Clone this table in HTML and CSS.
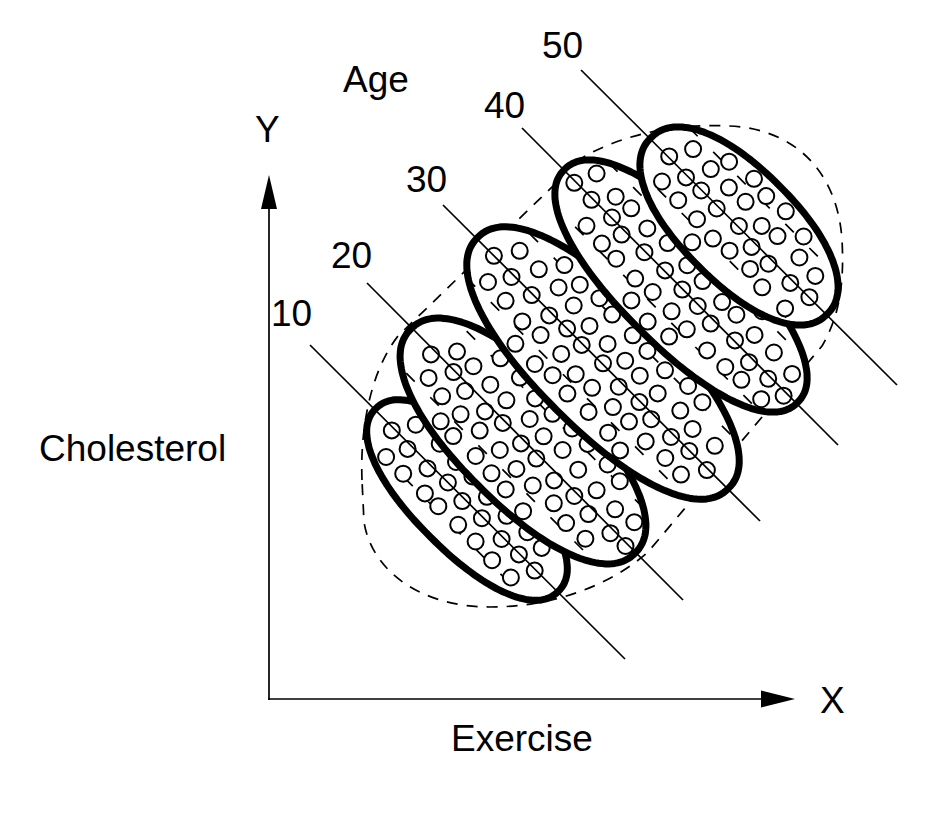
FILE: index.html
```html
<!DOCTYPE html>
<html lang="en">
<head>
<meta charset="utf-8">
<title>Age, exercise and cholesterol</title>
<link rel="stylesheet" href="styles.css">
</head>
<body>
<svg class="figure" id="figure" width="938" height="838" viewBox="0 0 938 838" xmlns="http://www.w3.org/2000/svg">
  <path class="hull" d="M 362,480 C 360,430 370,372 398,336 L 582,158 C 622,134 682,121 742,127 C 802,135 838,178 842,240 C 845,292 836,322 822,346 L 648,552 C 610,586 552,607 490,607 C 422,607 372,572 364,522 Z"/>
  <g id="blobs"></g>
  <line class="axis" x1="269" y1="700" x2="269" y2="206"/>
  <polygon class="arrow" points="269,175 261,209 277,209"/>
  <line class="axis" x1="268" y1="699" x2="763" y2="699"/>
  <polygon class="arrow" points="795,699 761,690.5 761,707.5"/>
  <text class="lbl" x="343" y="92">Age</text>
  <text class="lbl" x="255" y="142">Y</text>
  <text class="lbl" x="542" y="58">50</text>
  <text class="lbl" x="484" y="118">40</text>
  <text class="lbl" x="406" y="192">30</text>
  <text class="lbl" x="331" y="268">20</text>
  <text class="lbl" x="271" y="326">10</text>
  <text class="lbl" x="39" y="461">Cholesterol</text>
  <text class="lbl" x="451" y="751">Exercise</text>
  <text class="lbl" x="820" y="713">X</text>
</svg>
<script src="script.js"></script>
</body>
</html>
```
FILE: styles.css
```css
html, body {
  margin: 0;
  padding: 0;
  background: #ffffff;
}
.figure {
  display: block;
}
.lbl {
  font-family: "Liberation Sans", Arial, Helvetica, sans-serif;
  font-size: 37px;
  fill: #000000;
}
.axis {
  stroke: #000000;
  stroke-width: 1.7;
}
.arrow {
  fill: #000000;
}
.hull {
  fill: none;
  stroke: #000000;
  stroke-width: 1.7;
  stroke-dasharray: 11 9;
}
.blob-fill {
  fill: #ffffff;
  stroke: none;
}
.blob-edge {
  fill: none;
  stroke: #000000;
  stroke-width: 7;
  stroke-linejoin: round;
}
.age-line {
  stroke: #000000;
  stroke-width: 1.7;
}
.frag-line {
  stroke: #000000;
  stroke-width: 1.7;
  stroke-dasharray: 12 22;
}
.dot {
  fill: #ffffff;
  stroke: #000000;
  stroke-width: 2;
}
```
FILE: script.js
```js
(function () {
  var NS = 'http://www.w3.org/2000/svg';
  var svg = document.getElementById('figure');
  var host = document.getElementById('blobs');
  var C = Math.SQRT1_2;
  var N = 2.2;
  var Q = N / (N - 1);
  var groups = [
    { cx: 467, cy: 500, a: 132, b: 52, line: [310, 345, 625, 659] },
    { cx: 523, cy: 441, a: 162, b: 63, line: [367, 283, 683, 600] },
    { cx: 603, cy: 363, a: 181, b: 66, line: [443, 205, 760, 521] },
    { cx: 681, cy: 286, a: 168, b: 60, line: [522, 128, 838, 445] },
    { cx: 739, cy: 226, a: 128, b: 57, line: [581, 70, 897, 385] }
  ];
  var seed = 20240611;
  function rnd() {
    seed = (seed * 1103515245 + 12345) % 2147483648;
    return seed / 2147483648;
  }
  function el(tag, attrs, cls) {
    var e = document.createElementNS(NS, tag);
    for (var k in attrs) e.setAttribute(k, attrs[k]);
    if (cls) e.setAttribute('class', cls);
    return e;
  }
  function toScreen(g, u, v) {
    return [g.cx + (u - v) * C, g.cy + (u + v) * C];
  }
  function sgnPow(x, p) {
    return (x < 0 ? -1 : 1) * Math.pow(Math.abs(x), p);
  }
  function shapePath(g) {
    var d = '';
    var steps = 160;
    for (var s = 0; s < steps; s++) {
      var t = (s / steps) * Math.PI * 2;
      var u = g.A * sgnPow(Math.cos(t), 2 / N);
      var v = g.b * sgnPow(Math.sin(t), 2 / N);
      var p = toScreen(g, u, v);
      d += (s === 0 ? 'M' : 'L') + p[0].toFixed(1) + ',' + p[1].toFixed(1);
    }
    return d + 'Z';
  }
  function inside(g, u, v, inset) {
    var ua = Math.abs(u) / (g.A - inset);
    var vb = Math.abs(v) / (g.b - inset);
    return Math.pow(ua, N) + Math.pow(vb, N) <= 1;
  }
  var defs = el('defs', {});
  svg.insertBefore(defs, svg.firstChild);

  groups.forEach(function (g, i) {
    var T = Math.sqrt(g.a * g.a + g.b * g.b);
    g.A = Math.pow(Math.pow(T, Q) - Math.pow(g.b, Q), 1 / Q);
    var d = shapePath(g);

    var cp = el('clipPath', { id: 'clip' + i });
    cp.appendChild(el('path', { d: d }));
    defs.appendChild(cp);

    var layer = el('g', {});
    layer.appendChild(el('path', { d: d }, 'blob-fill'));

    var frags = el('g', { 'clip-path': 'url(#clip' + i + ')' });
    [-0.6, 0.55].forEach(function (f, j) {
      var v = f * g.b;
      var p1 = toScreen(g, -g.A - 20, v);
      var p2 = toScreen(g, g.A + 20, v);
      var ln = el('line', { x1: p1[0], y1: p1[1], x2: p2[0], y2: p2[1] }, 'frag-line');
      ln.setAttribute('stroke-dashoffset', String(j * 13 + i * 7));
      frags.appendChild(ln);
    });
    layer.appendChild(frags);

    var dots = el('g', {});
    var su = 25, sv = 22;
    for (var k = -6; k <= 6; k++) {
      var v0 = k * sv + 3;
      var off = (Math.abs(k) % 2 === 0) ? 0 : su / 2;
      for (var m = -12; m <= 12; m++) {
        var u = m * su + off + (rnd() - 0.5) * 7;
        var v = v0 + (rnd() - 0.5) * 6;
        if (!inside(g, u, v, 11)) continue;
        var p = toScreen(g, u, v);
        dots.appendChild(el('circle', { cx: p[0].toFixed(1), cy: p[1].toFixed(1), r: 8 }, 'dot'));
      }
    }
    layer.appendChild(dots);

    layer.appendChild(el('line', { x1: g.line[0], y1: g.line[1], x2: g.line[2], y2: g.line[3] }, 'age-line'));
    layer.appendChild(el('path', { d: d }, 'blob-edge'));
    host.appendChild(layer);
  });
})();
```
